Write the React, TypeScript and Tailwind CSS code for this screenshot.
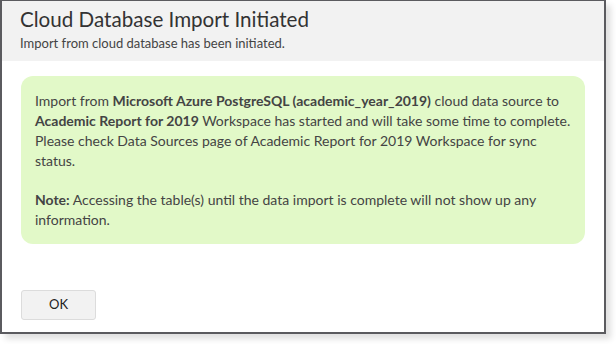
export default function App() {
  return (
    <div className="w-[616px] h-[344px] bg-white" style={{ fontFamily: "Lato, 'Open Sans', sans-serif" }}>
      <div className="w-[606px] h-[334px] flex flex-col bg-white border-t border-l-2 border-r-2 border-b-2 border-[#5b5b5f] shadow-[5px_5px_6px_rgba(0,0,0,0.12)]">
        <div className="h-[60px] bg-[#f2f2f2] pl-[18px] pt-[5px]">
          <h1 className="text-[20.6px] leading-[26px] text-[#333]">Cloud Database Import Initiated</h1>
          <p className="text-[13px] leading-[18px] text-[#444] mt-[2px]">Import from cloud database has been initiated.</p>
        </div>
        <div className="flex-1 flex flex-col px-[19px] pt-[15px] pb-[12px]">
          <div className="bg-[#e2f9c8] rounded-[12px] pl-[14px] pr-[6px] pt-[15px] pb-[14px] text-[14px] leading-[20px] text-[#444]">
            <p>
              Import from <span className="font-bold">Microsoft Azure PostgreSQL (academic_year_2019)</span> cloud data source to
              <br />
              <span className="font-bold">Academic Report for 2019</span> Workspace has started and will take some time to complete.
              <br />
              Please check Data Sources page of Academic Report for 2019 Workspace for sync
              <br />
              status.
            </p>
            <p className="mt-[19px]">
              <span className="font-bold">Note:</span> Accessing the table(s) until the data import is complete will not show up any
              <br />
              information.
            </p>
          </div>
          <div className="mt-auto">
            <button className="w-[75px] h-[30px] bg-[#f2f2f2] border border-[#dcdcdc] rounded-[3px] text-[13px] text-[#222]">
              OK
            </button>
          </div>
        </div>
      </div>
    </div>
  );
}
